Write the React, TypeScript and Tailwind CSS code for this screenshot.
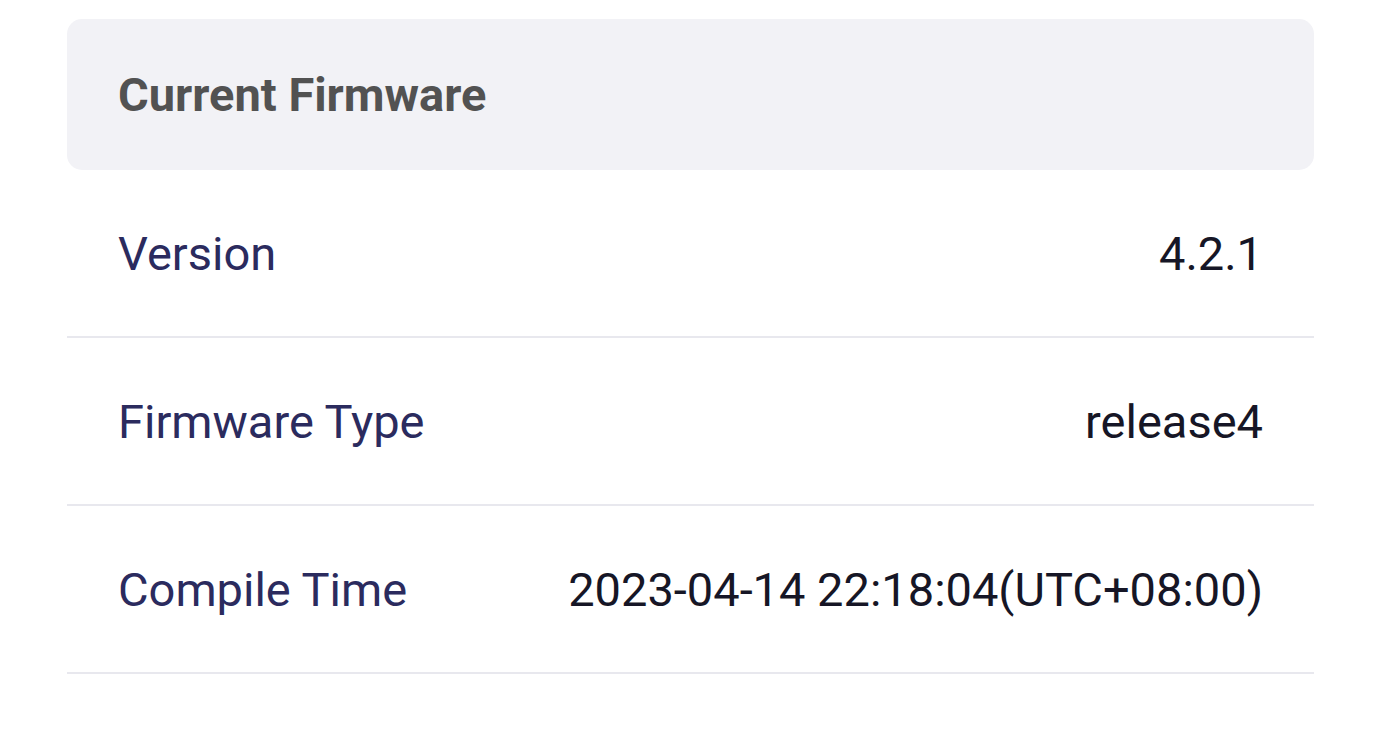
const rows = [
  { label: 'Version', value: '4.2.1' },
  { label: 'Firmware Type', value: 'release4' },
  { label: 'Compile Time', value: '2023-04-14 22:18:04(UTC+08:00)' },
];

export default function App() {
  return (
    <div className="min-h-screen bg-white pl-[67px] pr-[66px] pt-[19px] font-['Roboto',sans-serif]">
      <div className="h-[151px] rounded-[15px] bg-[#f2f2f6] pl-[51px] pr-[51px] flex items-center">
        <h2 className="text-[47px] font-bold text-[#525252] leading-none">Current Firmware</h2>
      </div>
      {rows.map((row) => (
        <div
          key={row.label}
          className="h-[168px] border-b-2 border-[#e8e8ee] pl-[51px] pr-[51px] flex items-center justify-between"
        >
          <span className="text-[47px] text-[#2b2b5e] leading-none">{row.label}</span>
          <span className="text-[47px] text-[#161626] leading-none">{row.value}</span>
        </div>
      ))}
    </div>
  );
}
